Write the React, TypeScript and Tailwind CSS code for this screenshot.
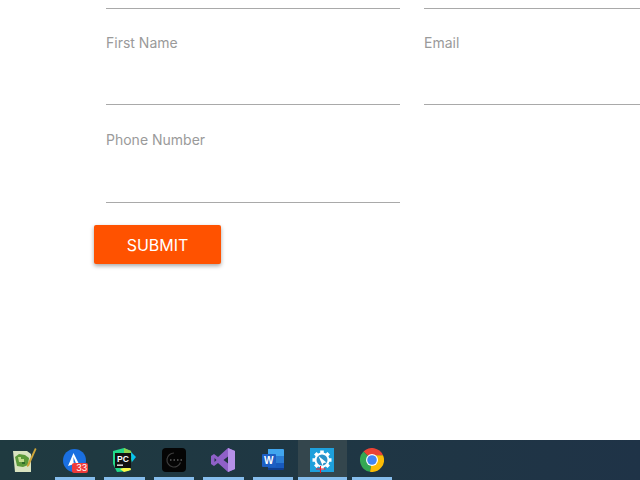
function Field({ label, rowClass = 'h-[97px] pt-[24px]' }: { label?: string; rowClass?: string }) {
  return (
    <div className={`border-b border-[#a9a9a9] ${rowClass}`}>
      {label && <span className="block text-[14px] leading-[20px] text-[#9a9a9a]">{label}</span>}
    </div>
  );
}

function NotepadIcon() {
  return (
    <svg width="24" height="24" viewBox="0 0 24 24">
      <path d="M0 3h14l4 3v18H2z" fill="#d9e3c0" />
      <path d="M2 9l4-3 6 1 4 3-1 7-5 2-6-1z" fill="#5c9a3a" />
      <path d="M5 9h3v2h3v3H6z" fill="#c2dc8a" />
      <path d="M9 14h3v2H9z" fill="#2f6b2a" />
      <path d="M14 17L22 0l1.5 1L16 18l-2 1z" fill="#cfa63a" />
    </svg>
  );
}

function AltIcon() {
  return (
    <div className="relative h-[23px] w-[23px] rounded-full bg-[#1a6fe0]">
      <svg className="absolute left-0 top-0" width="23" height="23" viewBox="0 0 23 23">
        <path d="M10.5 4L17 17l-6-2-6 2z" fill="#ffffff" />
        <path d="M10.5 8l2.5 6.5-2.5-1z" fill="#1a6fe0" />
      </svg>
      <span className="absolute left-[9px] top-[14px] flex h-[10px] w-[16px] items-center justify-end rounded-[2px] bg-[#ef3b3b] pr-[1px] text-[9px] leading-none text-white">33</span>
    </div>
  );
}

function PyCharmIcon() {
  return (
    <svg width="24" height="24" viewBox="0 0 24 24">
      <path d="M1 3l11-3 7 3 1 8-3 12-12 1-4-8z" fill="#21d789" />
      <path d="M12 0l7 3 1 5-8-3z" fill="#8fd14f" />
      <path d="M19 4l5 5-4 5z" fill="#07c3f2" />
      <path d="M8 21l10-3 1 4-7 2z" fill="#fcf84a" />
      <rect x="3" y="5" width="16" height="15" fill="#111111" />
      <rect x="5" y="16.5" width="6" height="1.3" fill="#ffffff" />
      <text x="5" y="14" fontSize="8.5" fontWeight="700" fill="#ffffff" fontFamily="Liberation Sans, sans-serif">PC</text>
    </svg>
  );
}

function BlackAppIcon() {
  return (
    <svg width="24" height="24" viewBox="0 0 24 24">
      <rect width="24" height="24" rx="4" fill="#050505" />
      <path d="M12 5a7 7 0 1 0 6.5 9.5" fill="none" stroke="#3d3d3d" strokeWidth="1.2" />
      <path d="M8 12h1.5M11.5 12H13M15 12h1.5M18.5 12H20" stroke="#8a8a8a" strokeWidth="1.2" />
    </svg>
  );
}

function VisualStudioIcon() {
  return (
    <svg width="24" height="24" viewBox="0 0 24 24">
      <path d="M17 0l7 3v18l-7 3L7 15l-4 3-3-2V8l3-2 4 3z" fill="#8f60c8" />
      <path d="M17 0l7 3v18l-7 3z" fill="#b690e8" />
      <path d="M3.5 10l2 2-2 2zM17 8.5L12.5 12l4.5 3.5z" fill="#1f3640" />
    </svg>
  );
}

function WordIcon() {
  return (
    <svg width="24" height="24" viewBox="0 0 24 24">
      <path d="M7 1h15a1 1 0 0 1 1 1v6H7z" fill="#41a5ee" />
      <rect x="7" y="8" width="16" height="7" fill="#2b7cd3" />
      <rect x="7" y="15" width="16" height="5" fill="#185abd" />
      <path d="M7 20h16v1a1 1 0 0 1-1 1H7z" fill="#103f91" />
      <rect x="1" y="6" width="14" height="13" rx="1" fill="#1d5fc4" />
      <text x="3" y="16" fontSize="10" fontWeight="700" fill="#ffffff" fontFamily="Liberation Sans, sans-serif">W</text>
    </svg>
  );
}

function SettingsAppIcon() {
  return (
    <svg width="24" height="25" viewBox="0 0 24 25">
      <rect width="24" height="24" fill="#1ea0dc" />
      <circle cx="12" cy="12" r="7.5" fill="#ffffff" />
      <path d="M12 2.5v19M2.5 12h19M5.3 5.3l13.4 13.4M18.7 5.3L5.3 18.7" stroke="#ffffff" strokeWidth="3.6" />
      <circle cx="12" cy="12" r="5.5" fill="#2b93c9" />
      <path d="M8.5 8l8 6.5-3 .5-1 2.5z" fill="#ffffff" />
      <path d="M6 21h9.5M10.5 18v7" stroke="#ee1c25" strokeWidth="1.1" />
    </svg>
  );
}

function ChromeIcon() {
  return (
    <svg width="24" height="24" viewBox="0 0 24 24">
      <path d="M12 12L3.5 3.5A12 12 0 0 1 23 7.2H12z" fill="#ea4335" />
      <path d="M12 12L3.5 3.5A12 12 0 0 0 10 23.8z" fill="#34a853" />
      <path d="M12 12l-2 11.8A12 12 0 0 0 23 7.2H12z" fill="#fbbc05" />
      <circle cx="12" cy="12" r="6" fill="#ffffff" />
      <circle cx="12" cy="12" r="4.8" fill="#4285f4" />
    </svg>
  );
}

function TaskItem({ children, active, running = true }: { children: React.ReactNode; active?: boolean; running?: boolean }) {
  return (
    <div className={`relative flex h-full w-[49.5px] items-center justify-center ${active ? 'bg-[#34464d]' : ''}`}>
      {children}
      {running && <div className={`absolute bottom-0 h-[3px] bg-[#86bdec] ${active ? 'left-0 right-0' : 'left-[4.5px] right-[4.5px]'}`} />}
    </div>
  );
}

export default function App() {
  return (
    <div className="flex h-[480px] w-[640px] flex-col overflow-hidden bg-white font-['Inter',sans-serif]">
      <main className="min-h-0 flex-1 pl-[106px]">
        <div className="grid w-[640px] grid-cols-[294px_294px] gap-x-[24px]">
          <Field rowClass="h-[9px]" />
          <Field rowClass="h-[9px]" />
          <Field label="First Name" rowClass="h-[96px] pt-[24px]" />
          <Field label="Email" rowClass="h-[96px] pt-[24px]" />
          <Field label="Phone Number" rowClass="h-[98px] pt-[25px]" />
        </div>
        <button className="ml-[-12px] mt-[22px] h-[39px] w-[127px] rounded-[2px] bg-[#ff5200] text-[16px] text-white shadow-[0_2px_4px_rgba(0,0,0,0.35)]">
          SUBMIT
        </button>
      </main>
      <footer className="flex h-[40px] shrink-0 items-center bg-gradient-to-r from-[#1f3a40] to-[#1f3347]">
        <div className="flex h-full w-[50px] items-center pl-[13px]">
          <NotepadIcon />
        </div>
        <TaskItem><AltIcon /></TaskItem>
        <TaskItem><PyCharmIcon /></TaskItem>
        <TaskItem><BlackAppIcon /></TaskItem>
        <TaskItem><VisualStudioIcon /></TaskItem>
        <TaskItem><WordIcon /></TaskItem>
        <TaskItem active><SettingsAppIcon /></TaskItem>
        <TaskItem><ChromeIcon /></TaskItem>
      </footer>
    </div>
  );
}
